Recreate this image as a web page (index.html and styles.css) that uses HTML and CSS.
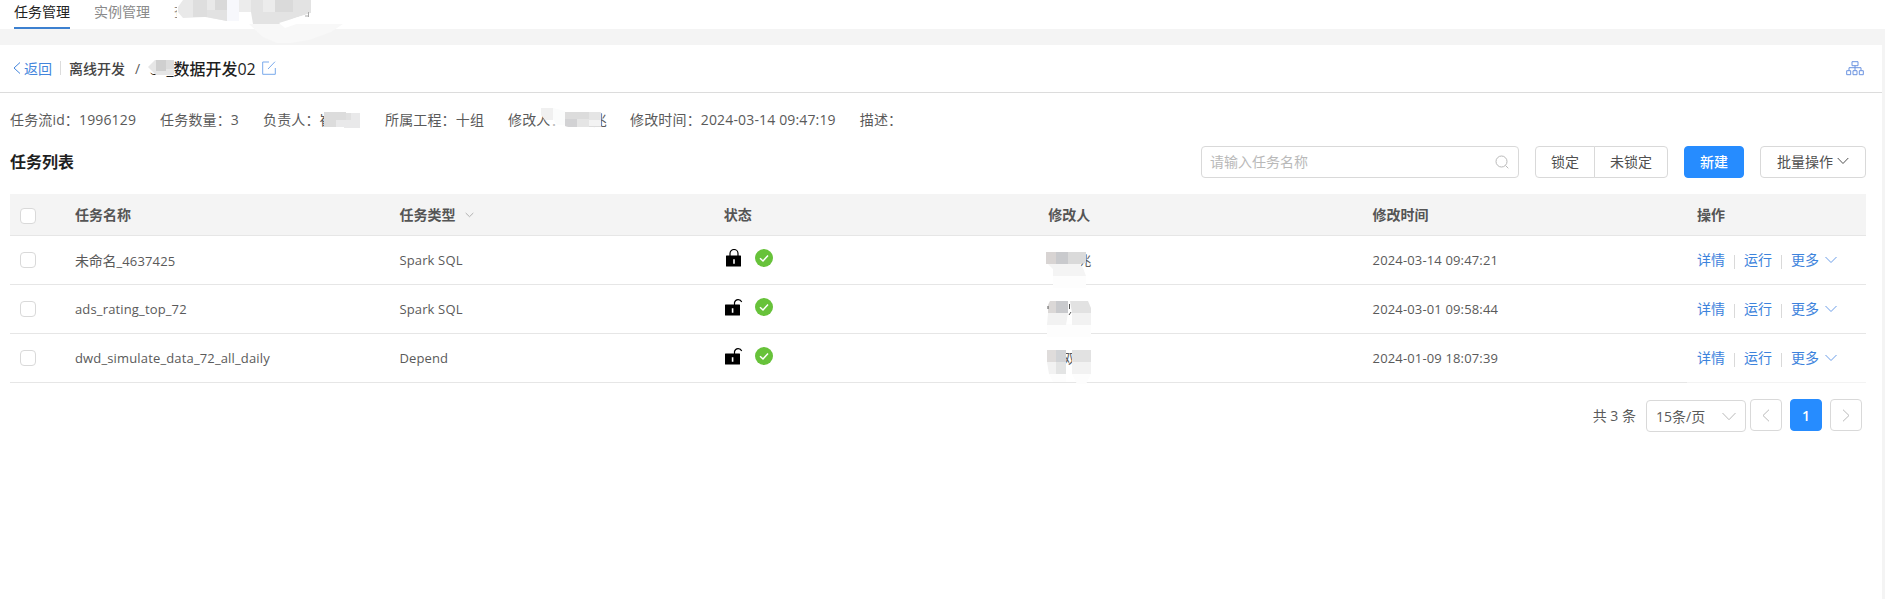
FILE: index.html
```html
<!DOCTYPE html>
<html lang="zh-CN">
<head>
    <meta charset="UTF-8">
    <meta name="viewport" content="width=device-width, initial-scale=1.0">
    <title>任务管理</title>
    <link rel="stylesheet" href="styles.css">
</head>
<body>
    <nav class="tabs">
        <a class="tab active">任务管理</a>
        <a class="tab">实例管理</a>
        <a class="tab masked">查
            <svg class="mask mask-tab" width="170" height="44" viewBox="0 0 170 44">
                <path fill="#fff" d="M4 0h140v26H4z"/>
                <path fill="#f8f8f8" d="M76 24h94l-12 8-22 8-18 3h-14l-14-6z"/>
                <path fill="#e9e9e9" d="M10 0h44v21L32 17l-22 1-5-6v-5z"/>
                <path fill="#dedede" d="M20 0h14v17H20z"/>
                <path fill="#d9d9d9" d="M42 0h12v12H42z"/>
                <path fill="#e2e2e2" d="M34 10h20v11l-20-4z"/>
                <path fill="#f7f8fc" d="M54 0h12v21H54z"/>
                <path fill="#e3e3e3" d="M78 0h60v13l-16 5-14 6H80l-2-12z"/>
                <path fill="#ececec" d="M66 0h12v12H66zM90 0h12v12H90z"/>
                <path fill="#dadada" d="M102 0h18v12h-18z"/>
                <path fill="#fff" d="M106 23l32-10v6l-26 9z"/>
                <path fill="none" stroke="#aaa" d="M132 16h3.500M135.500 12v5"/>
            </svg>
        </a>
    </nav>

    <div class="panel">
        <header class="crumbs">
            <a class="back">
                <svg width="8" height="14" viewBox="0 0 8 14"><path d="M7 1.500L1 7l6 5.500"/></svg>返回
            </a>
            <span class="line"></span>
            <span class="parent">离线开发</span>
            <span class="slash">/</span>
            <h1 class="masked">co_数据开发02
                <svg class="mask mask-title" width="30" height="24" viewBox="0 0 30 24">
                    <path fill="#fff" d="M-1 0h27v12l-7 5H5l-6-3z"/>
                    <path fill="#e6e6e6" d="M0 10l7-7h19v15H8z"/>
                    <path fill="#cfcfcf" d="M8 3h10v11H8z"/>
                    <path fill="#dcdcdc" d="M18 3h8v9h-8z"/>
                </svg>
            </h1>
            <svg class="edit" width="14" height="14" viewBox="0 0 14 14"><path d="M7 1H.7v12.300h12.600V7M6 8l7-7.300"/></svg>
            <svg class="tree" width="18" height="15" viewBox="0 0 18 15">
                <path d="M6 .7h6v4H6zM9 4.700v5M3 9.700v-3h12v3M.7 9.700h4v4h-4zM7 9.700h4v4H7zM13.300 9.700h4v4h-4z"/>
            </svg>
        </header>

        <div class="info">
            <span>任务流id：1996129</span>
            <span>任务数量：3</span>
            <span class="masked owner">负责人：崔
                <svg class="mask mask-owner" width="38" height="18" viewBox="0 0 38 18">
                    <path fill="#dcdcdc" d="M0 1h22v15H0z"/>
                    <path fill="#e9e9ea" d="M12 9h8v7h-8zM22 2h14v15H20V9h2z"/>
                    <path fill="#e0e0e0" d="M22 2h5v7h-5z"/>
                </svg>
            </span>
            <span>所属工程：十组</span>
            <span class="masked editor">修改人：<i>兆</i>
                <svg class="mask mask-editor" width="66" height="24" viewBox="0 0 66 24">
                    <path fill="#fff" d="M6 12h7l12 4v6H12z" opacity=".6"/>
                    <path fill="#f0f0f0" d="M0 2h12v12H4L0 9z"/>
                    <path fill="#fbfcfc" d="M12 2l12 3v14H16l-4-6z"/>
                    <path fill="#dcdcdc" d="M24 6h36v15H28l-4-1z"/>
                    <path fill="#d2d2d4" d="M24 13h12v8h-8l-4-1z"/>
                    <path fill="#e5e5e5" d="M36 13h12v8H36zM48 6h12v8H48z"/>
                    <path fill="#f3f3f3" d="M48 14h12v6H48z"/>
                </svg>
            </span>
            <span>修改时间：2024-03-14 09:47:19</span>
            <span>描述：</span>
        </div>

        <div class="toolbar">
            <h2>任务列表</h2>
            <div class="search">
                <span>请输入任务名称</span>
                <svg width="14" height="14" viewBox="0 0 14 14"><circle cx="6.500" cy="6.500" r="5.500"/><path d="M10.500 10.500l2.800 2.800"/></svg>
            </div>
            <div class="group">
                <button>锁定</button>
                <button>未锁定</button>
            </div>
            <button class="primary">新建</button>
            <button class="batch">批量操作
                <svg class="down" width="12" height="8" viewBox="0 0 12 8"><path d="M.7 1L6 6.500 11.300 1"/></svg>
            </button>
        </div>

        <table>
            <colgroup>
                <col class="col-check"><col><col><col><col><col><col class="col-ops">
            </colgroup>
            <thead>
                <tr>
                    <th class="all"><span class="check"></span></th>
                    <th>任务名称</th>
                    <th>任务类型<svg class="filter" width="9" height="6" viewBox="0 0 9 6"><path d="M.7 1l3.800 3.700L8.300 1"/></svg></th>
                    <th>状态</th>
                    <th>修改人</th>
                    <th>修改时间</th>
                    <th>操作</th>
                </tr>
            </thead>
            <tbody>
                <tr>
                    <td><span class="check"></span></td>
                    <td><span class="cjk">未命名</span>_4637425</td>
                    <td>Spark SQL</td>
                    <td>
                        <div class="status">
                            <svg width="18" height="18" viewBox="0 0 18 18"><path d="M5 7V4.500a4 4 0 0 1 8 0V7" fill="none" stroke="#000" stroke-width="1.200"/><path fill-rule="evenodd" d="M1.500 6.500h14a.5.5 0 0 1 .5.500v10a.5.500 0 0 1-.5.500h-14a.5.500 0 0 1-.5-.5V7a.5.500 0 0 1 .5-.5zM8.200 10.300v4.400h1.600v-4.400z"/></svg>
                            <svg width="18" height="18" viewBox="0 0 18 18"><circle cx="9" cy="9" r="9" fill="#67c23a"/><path d="M5 9.200l3 2.800 5-5.500" fill="none" stroke="#fff" stroke-width="1.500"/></svg>
                        </div>
                    </td>
                    <td>
                        <div class="person"><span>兆</span>
                            <svg class="mask" width="46" height="38" viewBox="0 0 46 38">
                                <path fill="#fdfdfd" d="M7 24h33v12H7z"/>
                                <path fill="#f4f4f4" d="M2 12h32l3 4 3 8H7v-7z"/>
                                <path fill="#d8d4d3" d="M0 0h10v12H0z"/>
                                <path fill="#c9cacd" d="M10 0h12v12H10z"/>
                                <path fill="#dadada" d="M22 0h18v11l-6 1H22z"/>
                            </svg>
                        </div>
                    </td>
                    <td>2024-03-14 09:47:21</td>
                    <td>
                        <div class="ops"><a>详情</a><a>运行</a><a>更多<svg class="down" width="12" height="8" viewBox="0 0 12 8"><path d="M.5 1L6 6.500 11.500 1"/></svg></a></div>
                    </td>
                </tr>
                <tr>
                    <td><span class="check"></span></td>
                    <td>ads_rating_top_72</td>
                    <td>Spark SQL</td>
                    <td>
                        <div class="status">
                            <svg width="18" height="18" viewBox="0 0 18 18"><path d="M9.500 7V4.500a3.800 3.800 0 0 1 7.200-.5" fill="none" stroke="#000" stroke-width="1.200"/><path fill-rule="evenodd" d="M.5 6.500h14a.5.500 0 0 1 .5.500v10a.5.500 0 0 1-.5.500H.5a.5.500 0 0 1-.5-.5V7a.5.500 0 0 1 .5-.5zM6.800 10.300v4.400h1.600v-4.400z"/></svg>
                            <svg width="18" height="18" viewBox="0 0 18 18"><circle cx="9" cy="9" r="9" fill="#67c23a"/><path d="M5 9.200l3 2.800 5-5.500" fill="none" stroke="#fff" stroke-width="1.500"/></svg>
                        </div>
                    </td>
                    <td>
                        <div class="person">
                            <svg class="mask" width="46" height="38" viewBox="0 0 46 38">
                                <path fill="#fdfdfd" d="M1 23h44v13H1z"/>
                                <path fill="#f2f2f2" d="M2 12h20l-2 12H1zM26 12h19v12H26z"/>
                                <path fill="#dbd8d7" d="M4 0h6v12H2V4z"/>
                                <path fill="#c9cacd" d="M10 0h12v12H10z"/>
                                <path fill="#e2e2e2" d="M24 0h18l3 7v5H26z"/>
                                <path stroke="#555" fill="none" d="M23.500 3v5M25 11l-2 3M2 5v3"/>
                            </svg>
                        </div>
                    </td>
                    <td>2024-03-01 09:58:44</td>
                    <td>
                        <div class="ops"><a>详情</a><a>运行</a><a>更多<svg class="down" width="12" height="8" viewBox="0 0 12 8"><path d="M.5 1L6 6.500 11.500 1"/></svg></a></div>
                    </td>
                </tr>
                <tr>
                    <td><span class="check"></span></td>
                    <td>dwd_simulate_data_72_all_daily</td>
                    <td>Depend</td>
                    <td>
                        <div class="status">
                            <svg width="18" height="18" viewBox="0 0 18 18"><path d="M9.500 7V4.500a3.800 3.800 0 0 1 7.200-.5" fill="none" stroke="#000" stroke-width="1.200"/><path fill-rule="evenodd" d="M.5 6.500h14a.5.500 0 0 1 .5.500v10a.5.500 0 0 1-.5.500H.5a.5.500 0 0 1-.5-.5V7a.5.500 0 0 1 .5-.5zM6.800 10.300v4.400h1.600v-4.400z"/></svg>
                            <svg width="18" height="18" viewBox="0 0 18 18"><circle cx="9" cy="9" r="9" fill="#67c23a"/><path d="M5 9.200l3 2.800 5-5.500" fill="none" stroke="#fff" stroke-width="1.500"/></svg>
                        </div>
                    </td>
                    <td>
                        <div class="person"><span class="middle">双</span>
                            <svg class="mask" width="46" height="38" viewBox="0 0 46 38">
                                <path fill="#fdfdfd" d="M3 24h17v8H7zM26 24h19l-5 10h-9z"/>
                                <path fill="#f2f2f2" d="M1 12h9v12H3zM26 12h19v12H26z"/>
                                <path fill="#e3e4e4" d="M10 12h10v12H10z"/>
                                <path fill="#dfdcdb" d="M1 0h9v12H1z"/>
                                <path fill="#d1d3d6" d="M10 0h10v12H10z"/>
                                <path fill="#e2e2e2" d="M26 0h19v12H26z"/>
                            </svg>
                        </div>
                    </td>
                    <td>2024-01-09 18:07:39</td>
                    <td>
                        <div class="ops"><a>详情</a><a>运行</a><a>更多<svg class="down" width="12" height="8" viewBox="0 0 12 8"><path d="M.5 1L6 6.500 11.500 1"/></svg></a></div>
                    </td>
                </tr>
            </tbody>
        </table>

        <div class="pager">
            <span class="total">共 3 条</span>
            <div class="size">15条/页
                <svg width="14" height="9" viewBox="0 0 14 9"><path d="M.5 1L7 7.700 13.500 1"/></svg>
            </div>
            <a class="page"><svg width="8" height="13" viewBox="0 0 8 13"><path d="M7 .7L1 6.500l6 5.800"/></svg></a>
            <a class="page current">1</a>
            <a class="page"><svg width="8" height="13" viewBox="0 0 8 13"><path d="M1 .7l6 5.800-6 5.800"/></svg></a>
        </div>
    </div>
</body>
</html>
```
FILE: styles.css
```css
* {
    box-sizing: border-box;
}
body {
    margin: 0;
    height: 599px;
    display: flex;
    flex-direction: column;
    overflow: hidden;
    font-family: "Open Sans", "Noto Sans CJK SC", sans-serif;
    font-size: 14px;
    color: #5a5a5a;
    background-color: #f4f4f4;
}
h1, h2 {
    margin: 0;
    font-size: 16px;
    font-weight: 500;
    color: #1f1f1f;
}
h2 {
    padding-bottom: 2px;
    font-weight: 600;
}
svg {
    flex: none;
    fill: none;
    stroke: currentColor;
}

/* верхние вкладки */
.tabs {
    display: flex;
    gap: 24px;
    height: 29px;
    padding-left: 14px;
    background-color: #fff;
}
.tab {
    height: 29px;
    line-height: 23px;
    color: #8a8a8a;
}
.tab.active {
    color: #222;
    border-bottom: 2px solid #3c80d0;
}

/* закрашенные имена */
.masked {
    position: relative;
    white-space: nowrap;
}
.mask {
    position: absolute;
    stroke: none;
    top: 0;
    left: 0;
}
.mask-tab {
    left: -1px;
}
.mask-title {
    top: 1px;
    left: -1px;
    overflow: visible;
}
.mask-owner {
    top: 1px;
    left: 61px;
}
.mask-editor {
    top: -4px;
    left: 33px;
}

.panel {
    flex: 1;
    margin: 16px 3px 0 0;
    background-color: #fff;
}
.crumbs {
    display: flex;
    align-items: center;
    height: 48px;
    padding: 0 18px 1px 13px;
    border-bottom: 1px solid #dcdcdc;
}
.back {
    display: flex;
    align-items: center;
    gap: 3px;
    color: #4385dc;
}
.line {
    width: 1px;
    height: 14px;
    margin: 0 8px;
    background-color: #dcdcdc;
}
.parent {
    color: #444;
    font-weight: 500;
}
.slash {
    margin: 0 9px 0 10px;
}
.edit {
    margin-left: 6px;
    color: #79a9ec;
}
.tree {
    margin-left: auto;
    color: #6b93e0;
}

.info {
    display: flex;
    gap: 24px;
    height: 53px;
    padding: 17px 0 0 10px;
    line-height: 20px;
    letter-spacing: 0.15px;
    white-space: nowrap;
}
.info span {
    height: 20px;
}
.info .owner {
    width: 98px;
}
.info .editor {
    width: 98px;
}
.editor i {
    font-style: normal;
    padding-left: 28px;
}

.toolbar {
    display: flex;
    align-items: center;
    height: 32px;
    padding: 0 16px 0 10px;
}
.search {
    display: flex;
    align-items: center;
    justify-content: space-between;
    width: 318px;
    height: 32px;
    margin-left: auto;
    padding: 0 9px 0 8px;
    border: 1px solid #d9d9d9;
    border-radius: 4px;
    color: #b9b9b9;
}
.search span {
    padding-bottom: 2px;
}
.group {
    display: flex;
    width: 133px;
    margin: 0 16px;
}
button {
    height: 32px;
    padding: 0 0 2px;
    font: inherit;
    color: #505050;
    background-color: #fff;
    border: 1px solid #d9d9d9;
    border-radius: 4px;
}
.group button:first-child {
    width: 60px;
    border-radius: 4px 0 0 4px;
}
.group button:last-child {
    flex: 1;
    margin-left: -1px;
    border-radius: 0 4px 4px 0;
}
.primary {
    width: 60px;
    color: #fff;
    font-weight: 500;
    background-color: #268cff;
    border-color: #268cff;
}
.batch {
    display: flex;
    align-items: center;
    justify-content: center;
    gap: 4px;
    width: 106px;
    margin-left: 16px;
}

table {
    width: 1856px;
    margin: 16px 0 0 10px;
    border-collapse: separate;
    border-spacing: 0;
    table-layout: fixed;
}
.col-check {
    width: 55px;
}
.col-ops {
    width: 179px;
}
th, td {
    padding: 0 10px;
    text-align: left;
    border-bottom: 1px solid #e6e6e6;
}
th {
    height: 42px;
    padding-bottom: 2px;
    font-weight: 600;
    color: #555;
    background-color: #f4f4f4;
}
th.all {
    padding: 2px 10px 0;
}
td {
    height: 49px;
    font-size: 13px;
    letter-spacing: 0.15px;
}
tr:last-child td:last-child {
    border-color: #f3f3f3;
}
.cjk {
    font-size: 14px;
    letter-spacing: -0.2px;
}
.check {
    display: block;
    width: 16px;
    height: 16px;
    border: 1px solid #d9d9d9;
    border-radius: 4px;
    background-color: #fff;
}
.filter {
    margin-left: 10px;
    vertical-align: 2px;
    color: #b0b0b0;
}
.status {
    display: flex;
    gap: 12px;
    padding: 0 0 4px 1px;
}
.status svg {
    fill: #000;
    stroke: none;
}
.person {
    position: relative;
    height: 20px;
}
.person span {
    padding-left: 30px;
}
.person .middle {
    padding-left: 15px;
}
.person .mask {
    top: 2px;
    left: -2px;
}
.ops {
    display: flex;
    font-size: 14px;
    letter-spacing: 0;
    color: #3d83dc;
}
.ops a {
    display: flex;
    align-items: center;
    line-height: 20px;
}
.ops a + a::before {
    content: "";
    width: 1px;
    height: 14px;
    margin: 3px 9px 0;
    background-color: #d9d9d9;
}
.ops .down {
    margin-left: 6px;
    color: #6b9de8;
}

.pager {
    display: flex;
    align-items: center;
    justify-content: flex-end;
    padding: 15px 20px 0 0;
}
.total {
    margin-right: 10px;
}
.size {
    display: flex;
    align-items: center;
    justify-content: space-between;
    width: 100px;
    height: 32px;
    margin: 2px 4px 0 0;
    padding: 0 9px;
    border: 1px solid #d9d9d9;
    border-radius: 4px;
}
.size svg {
    color: #b9b9b9;
}
.page {
    display: flex;
    align-items: center;
    justify-content: center;
    width: 32px;
    height: 32px;
    border: 1px solid #d9d9d9;
    border-radius: 4px;
    color: #b9b9b9;
}
.page + .page {
    margin-left: 8px;
}
.page.current {
    color: #fff;
    font-weight: 600;
    background-color: #268cff;
    border-color: #268cff;
}
```
